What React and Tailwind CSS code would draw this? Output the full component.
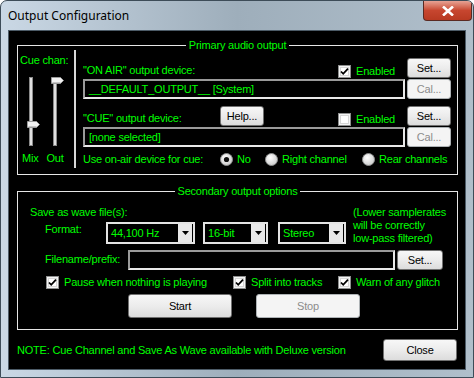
import React from "react";

const green = "text-[#00ff00]";

function Btn({ children, disabled, className = "" }) {
  return (
    <div
      className={
        "flex items-center justify-center rounded-[3px] border text-[11px] leading-none " +
        (disabled
          ? "border-[#adb2b5] bg-[#f4f4f4] text-[#8c8c8c] "
          : "border-[#707070] bg-gradient-to-b from-[#f7f7f7] via-[#ececec] to-[#dcdcdc] text-black ") +
        className
      }
    >
      {children}
    </div>
  );
}

function Check({ checked }) {
  return (
    <svg width="13" height="13" viewBox="0 0 13 13" className="shrink-0">
      <rect x="0.5" y="0.5" width="12" height="12" fill="#f4f4f4" stroke="#8e8f8f" />
      <rect x="2.5" y="2.5" width="8" height="8" fill="#ffffff" stroke="#d6d6d6" />
      {checked && <path d="M3 6.5 L5.2 8.8 L10 3.6" fill="none" stroke="#000" strokeWidth="1.8" />}
    </svg>
  );
}

function Radio({ checked }) {
  return (
    <svg width="13" height="13" viewBox="0 0 13 13" className="shrink-0">
      <defs>
        <radialGradient id="rg" cx="40%" cy="35%" r="70%">
          <stop offset="0" stopColor="#ffffff" />
          <stop offset="1" stopColor="#c9c9c9" />
        </radialGradient>
      </defs>
      <circle cx="6.5" cy="6.5" r="6" fill="url(#rg)" stroke="#8e8f8f" />
      {checked && <circle cx="6.5" cy="6.5" r="2.6" fill="#111" />}
    </svg>
  );
}

function Field({ children, className = "" }) {
  return (
    <div
      className={
        "flex items-center border-2 border-t-[#9a9a9a] border-l-[#9a9a9a] border-r-[#e8e8e8] border-b-[#e8e8e8] bg-black pl-[4px] text-[11px] " +
        green +
        " " +
        className
      }
    >
      {children}
    </div>
  );
}

function Combo({ value, className = "" }) {
  return (
    <div className={"flex items-center border-2 border-[#e4e4e4] bg-black " + className}>
      <span className={"flex-1 pl-[3px] text-[11px] " + green}>{value}</span>
      <div className="mr-[1px] flex h-[18px] w-[14px] items-center justify-center bg-[#e8e8e8]">
        <svg width="7" height="4" viewBox="0 0 7 4">
          <path d="M0 0 H7 L3.5 4 Z" fill="#000" />
        </svg>
      </div>
    </div>
  );
}

function GroupBox({ title, className = "", children }) {
  return (
    <div className={"border border-[#e6e6e6] " + className}>
      <div className="-mb-[6px] -mt-[7px] flex h-[13px] justify-center">
        <span className={"bg-black px-[3px] text-[11px] leading-[13px] " + green}>{title}</span>
      </div>
      {children}
    </div>
  );
}

function Sliders() {
  const thumb = (x, y) => (
    <g>
      <path
        d={`M${x} ${y} H${x + 9} L${x + 12} ${y + 3} L${x + 9} ${y + 6} H${x} Z`}
        fill="#f2f2f2"
        stroke="#9b9b9b"
      />
      <line x1={x + 1} y1={y + 5} x2={x + 9} y2={y + 5} stroke="#c4c4c4" />
    </g>
  );
  return (
    <svg width="56" height="74" viewBox="0 0 56 74">
      <rect x="11.5" y="3.5" width="3" height="68" fill="#e0e0e0" stroke="#8a8a8a" />
      <rect x="35.5" y="3.5" width="3" height="68" fill="#e0e0e0" stroke="#8a8a8a" />
      {thumb(9.5, 47.5)}
      {thumb(33.5, 3.5)}
    </svg>
  );
}

export default function App() {
  return (
    <div className="flex h-[378px] w-[474px] flex-col overflow-hidden rounded-t-[7px] border border-[#3d4c58] bg-gradient-to-r from-[#cad8e5] via-[#9eaebb] to-[#b0bfcb] font-['Liberation_Sans',Arial,sans-serif] tracking-[-0.2px]">
      {/* title bar */}
      <div className="flex h-[29px] shrink-0 items-start justify-between">
        <span className="ml-[7px] mt-[7px] font-['Noto_Sans',sans-serif] text-[12px] leading-[16px] tracking-normal text-black">
          Output Configuration
        </span>
        <div className="mr-[1px] flex h-[20px] w-[49px] items-center justify-center rounded-b-[4px] border border-t-0 border-[#5a2a22] bg-gradient-to-b from-[#e6a294] via-[#c7462f] to-[#b83a22]">
          <svg width="12" height="10" viewBox="0 0 12 10">
            <path d="M1 0.5 L11 9.5 M11 0.5 L1 9.5" stroke="#fff" strokeWidth="2.6" />
          </svg>
        </div>
      </div>

      {/* client area */}
      <div className="ml-[7px] flex h-[340px] w-[458px] flex-col border border-[#4d5c68] bg-black">
        <GroupBox title="Primary audio output" className="ml-[8px] mt-[14px] h-[130px] w-[441px]">
          <div className="flex">
            {/* cue channel sliders */}
            <div className="flex w-[56px] flex-col">
              <span className={"ml-[2px] mt-[8px] text-[11px] leading-[13px] " + green}>Cue chan:</span>
              <div className="mt-[7px]">
                <Sliders />
              </div>
              <div className={"mt-[4px] flex text-[11px] leading-[13px] " + green}>
                <span className="ml-[4px]">Mix</span>
                <span className="ml-[8px]">Out</span>
              </div>
            </div>
            <div className="mt-[4px] h-[118px] w-[2px] bg-[#d8d8d8]" />

            {/* device rows */}
            <div className="ml-[7px] flex w-[368px] flex-col text-[11px]">
              <div className="mt-[12px] flex h-[20px]">
                <span className={"mt-[6px] w-[255px] leading-[13px] " + green}>"ON AIR" output device:</span>
                <div className="flex w-[69px] items-center gap-[5px] pt-[6px]">
                  <Check checked />
                  <span className={green}>Enabled</span>
                </div>
                <Btn className="w-[44px]">Set...</Btn>
              </div>
              <div className="mt-[1px] flex h-[20px] gap-[2px]">
                <Field className="w-[322px]">__DEFAULT_OUTPUT__ [System]</Field>
                <Btn disabled className="w-[44px]">Cal...</Btn>
              </div>

              <div className="mt-[7px] flex h-[20px]">
                <span className={"mt-[6px] w-[137px] leading-[13px] " + green}>"CUE" output device:</span>
                <Btn className="w-[44px]">Help...</Btn>
                <div className="ml-[74px] flex w-[69px] items-center gap-[5px] pt-[6px]">
                  <Check />
                  <span className={green}>Enabled</span>
                </div>
                <Btn className="w-[44px]">Set...</Btn>
              </div>
              <div className="mt-[1px] flex h-[20px] gap-[2px]">
                <Field className="w-[322px]">[none selected]</Field>
                <Btn disabled className="w-[44px]">Cal...</Btn>
              </div>

              <div className={"mt-[5px] flex h-[14px] items-center leading-[13px] " + green}>
                <span className="w-[137px]">Use on-air device for cue:</span>
                <div className="flex w-[45px] items-center gap-[4px]">
                  <Radio checked />
                  <span>No</span>
                </div>
                <div className="flex w-[97px] items-center gap-[4px]">
                  <Radio />
                  <span>Right channel</span>
                </div>
                <div className="flex items-center gap-[4px]">
                  <Radio />
                  <span>Rear channels</span>
                </div>
              </div>
            </div>
          </div>
        </GroupBox>

        <GroupBox title="Secondary output options" className="ml-[8px] mt-[16px] h-[139px] w-[441px]">
          <div className="flex text-[11px] leading-[13px]">
            <div className="flex w-[335px] flex-col">
              <span className={"ml-[12px] mt-[14px] " + green}>Save as wave file(s):</span>
              <div className="mt-[3px] flex h-[22px]">
                <span className={"ml-[27px] mt-[1px] w-[61px] " + green}>Format:</span>
                <Combo value="44,100 Hz" className="w-[89px]" />
                <Combo value="16-bit" className="ml-[8px] w-[65px]" />
                <Combo value="Stereo" className="ml-[10px] w-[68px]" />
              </div>
            </div>
            <div className={"mt-[14px] w-[100px] " + green}>
              (Lower samplerates
              <br />
              will be correctly
              <br />
              low-pass filtered)
            </div>
          </div>

          <div className="mt-[5px] flex h-[20px] text-[11px]">
            <span className={"ml-[27px] mt-[3px] w-[83px] leading-[13px] " + green}>Filename/prefix:</span>
            <Field className="w-[267px]" />
            <Btn className="ml-[2px] w-[46px]">Set...</Btn>
          </div>

          <div className={"ml-[28px] mt-[6px] flex h-[13px] items-center text-[11px] " + green}>
            <div className="flex w-[187px] items-center gap-[5px]">
              <Check checked />
              <span>Pause when nothing is playing</span>
            </div>
            <div className="flex w-[105px] items-center gap-[5px]">
              <Check checked />
              <span>Split into tracks</span>
            </div>
            <div className="flex items-center gap-[5px]">
              <Check checked />
              <span>Warn of any glitch</span>
            </div>
          </div>

          <div className="ml-[110px] mt-[5px] flex h-[24px] gap-[24px]">
            <Btn className="w-[104px]">Start</Btn>
            <Btn disabled className="w-[104px]">Stop</Btn>
          </div>
        </GroupBox>

        <div className="mt-[9px] flex items-center justify-between pl-[8px] pr-[8px]">
          <span className={"text-[11px] " + green}>
            NOTE: Cue Channel and Save As Wave available with Deluxe version
          </span>
          <Btn className="h-[22px] w-[74px]">Close</Btn>
        </div>
      </div>
    </div>
  );
}
